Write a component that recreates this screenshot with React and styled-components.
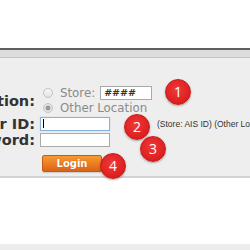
import React from "react";
import styled, { createGlobalStyle } from "styled-components";

const Global = createGlobalStyle`
  html, body { margin: 0; padding: 0; background: #ffffff; }
  body { width: 250px; height: 250px; overflow: hidden; font-family: "DejaVu Sans", Verdana, sans-serif; }
`;

const Page = styled.div`
  position: relative;
  width: 250px;
  height: 250px;
  overflow: hidden;
  display: flex;
  flex-direction: column;
`;

const TopSpace = styled.div`
  height: 48px;
  background: #ffffff;
`;

const PanelHeader = styled.div`
  height: 7px;
  background: #dcdcdc;
  border-top: 2px solid #5e5e5e;
  border-bottom: 1px solid #c4c4c4;
`;

const PanelBody = styled.div`
  background: #eeeeee;
  border-bottom: 2px solid #d2d2d2;
  padding: 28px 0 4px 0;
`;

const FormGrid = styled.div`
  display: grid;
  grid-template-columns: 35px auto;
  column-gap: 5px;
  row-gap: 2px;
  align-items: center;
`;

const Label = styled.div`
  display: flex;
  justify-content: flex-end;
  white-space: nowrap;
  font-family: "DejaVu Sans", Verdana, sans-serif;
  font-weight: bold;
  font-size: 14.5px;
  line-height: 14px;
  height: 14px;
  color: #333333;
  grid-row: ${(p) => (p.$span ? `span ${p.$span}` : "auto")};
`;

const RadioGroup = styled.div`
  display: flex;
  flex-direction: column;
  gap: 1px;
`;

const RadioOption = styled.div`
  display: flex;
  align-items: center;
  height: 14px;
  padding-left: 3px;
  gap: 7px;
  font-family: "DejaVu Sans", Verdana, sans-serif;
  font-size: 11.8px;
  color: #8a8a8a;
  white-space: nowrap;
`;

const Radio = styled.span`
  box-sizing: border-box;
  width: 10px;
  height: 10px;
  border-radius: 50%;
  border: 1px solid #c2c2c2;
  background: ${(p) =>
    p.$checked
      ? "radial-gradient(circle, #9a9a9a 0 2.2px, #e6e6e6 2.8px)"
      : "linear-gradient(#f6f6f6, #e4e4e4)"};
  flex: none;
`;

const StoreInput = styled.div`
  box-sizing: border-box;
  width: 52px;
  height: 14px;
  margin-left: -2px;
  background: #ffffff;
  border: 1px solid #a9a9a9;
  font-family: "DejaVu Sans", Verdana, sans-serif;
  font-size: 9.5px;
  font-weight: bold;
  line-height: 12px;
  color: #333;
  padding-left: 3px;
`;

const FieldRow = styled.div`
  display: flex;
  align-items: center;
  height: 14px;
`;

const TextBox = styled.div`
  box-sizing: border-box;
  flex: none;
  width: 70px;
  height: 14px;
  background: #ffffff;
  border: 1px solid ${(p) => (p.$focused ? "#86b2df" : "#a9a9a9")};
  box-shadow: ${(p) => (p.$focused ? "0 0 1px #a8c8ec" : "none")};
  background-image: ${(p) =>
    p.$focused
      ? "linear-gradient(to right, transparent 2px, #000 2px, #000 3px, transparent 3px)"
      : "none"};
  background-size: 100% 9px;
  background-position: 0 1px;
  background-repeat: no-repeat;
`;

const Hint = styled.span`
  margin-left: 47px;
  font-family: "Liberation Sans", Arial, sans-serif;
  font-size: 8.5px;
  color: #333333;
  white-space: nowrap;
`;

const ButtonRow = styled.div`
  grid-column: 2;
  margin-top: 6px;
  padding-left: 2px;
  height: 17px;
`;

const LoginButton = styled.button`
  display: block;
  box-sizing: border-box;
  width: 60px;
  height: 17px;
  padding: 0;
  border: 1px solid #c85b17;
  border-radius: 2px;
  background: linear-gradient(#f59a35, #ec7b1f 55%, #d8631a);
  color: #ffffff;
  font-family: "DejaVu Sans", Verdana, sans-serif;
  font-weight: bold;
  font-size: 10px;
  line-height: 15px;
  text-shadow: 0 0 1px rgba(120, 50, 0, 0.4);
  box-shadow: 0 1px 1px rgba(0, 0, 0, 0.15);
`;

const Gap = styled.div`
  flex: 1;
  background: #ffffff;
`;

const Footer = styled.div`
  height: 6px;
  background: #ececec;
`;

const Badge = styled.div`
  position: absolute;
  left: ${(p) => p.$x - 13}px;
  top: ${(p) => p.$y - 13}px;
  box-sizing: border-box;
  width: 26px;
  height: 26px;
  border-radius: 50%;
  background: radial-gradient(circle at 45% 40%, #ee3a3a, #df2222 60%, #c81818);
  border: 1px solid #c91a1a;
  box-shadow: 0 1px 2px rgba(0, 0, 0, 0.3);
  display: flex;
  align-items: center;
  justify-content: center;
  color: #ffffff;
  font-family: "Open Sans", "Noto Sans", sans-serif;
  font-size: 14px;
  line-height: 1;
`;

export default function App() {
  return (
    <Page>
      <Global />
      <TopSpace />
      <PanelHeader />
      <PanelBody>
        <FormGrid>
          <Label $span={2}>Location:</Label>
          <RadioGroup style={{ gridRow: "span 2" }}>
            <RadioOption>
              <Radio />
              <span>Store:</span>
              <StoreInput>####</StoreInput>
            </RadioOption>
            <RadioOption>
              <Radio $checked />
              <span>Other Location</span>
            </RadioOption>
          </RadioGroup>
          <Label>User ID:</Label>
          <FieldRow>
            <TextBox $focused />
            <Hint>(Store: AIS ID) (Other Location: Network ID)</Hint>
          </FieldRow>
          <Label>Password:</Label>
          <FieldRow>
            <TextBox />
          </FieldRow>
          <ButtonRow>
            <LoginButton>Login</LoginButton>
          </ButtonRow>
        </FormGrid>
      </PanelBody>
      <Gap />
      <Footer />
      <Badge $x={178} $y={92}>1</Badge>
      <Badge $x={137} $y={127}>2</Badge>
      <Badge $x={153} $y={149}>3</Badge>
      <Badge $x={113} $y={166}>4</Badge>
    </Page>
  );
}
